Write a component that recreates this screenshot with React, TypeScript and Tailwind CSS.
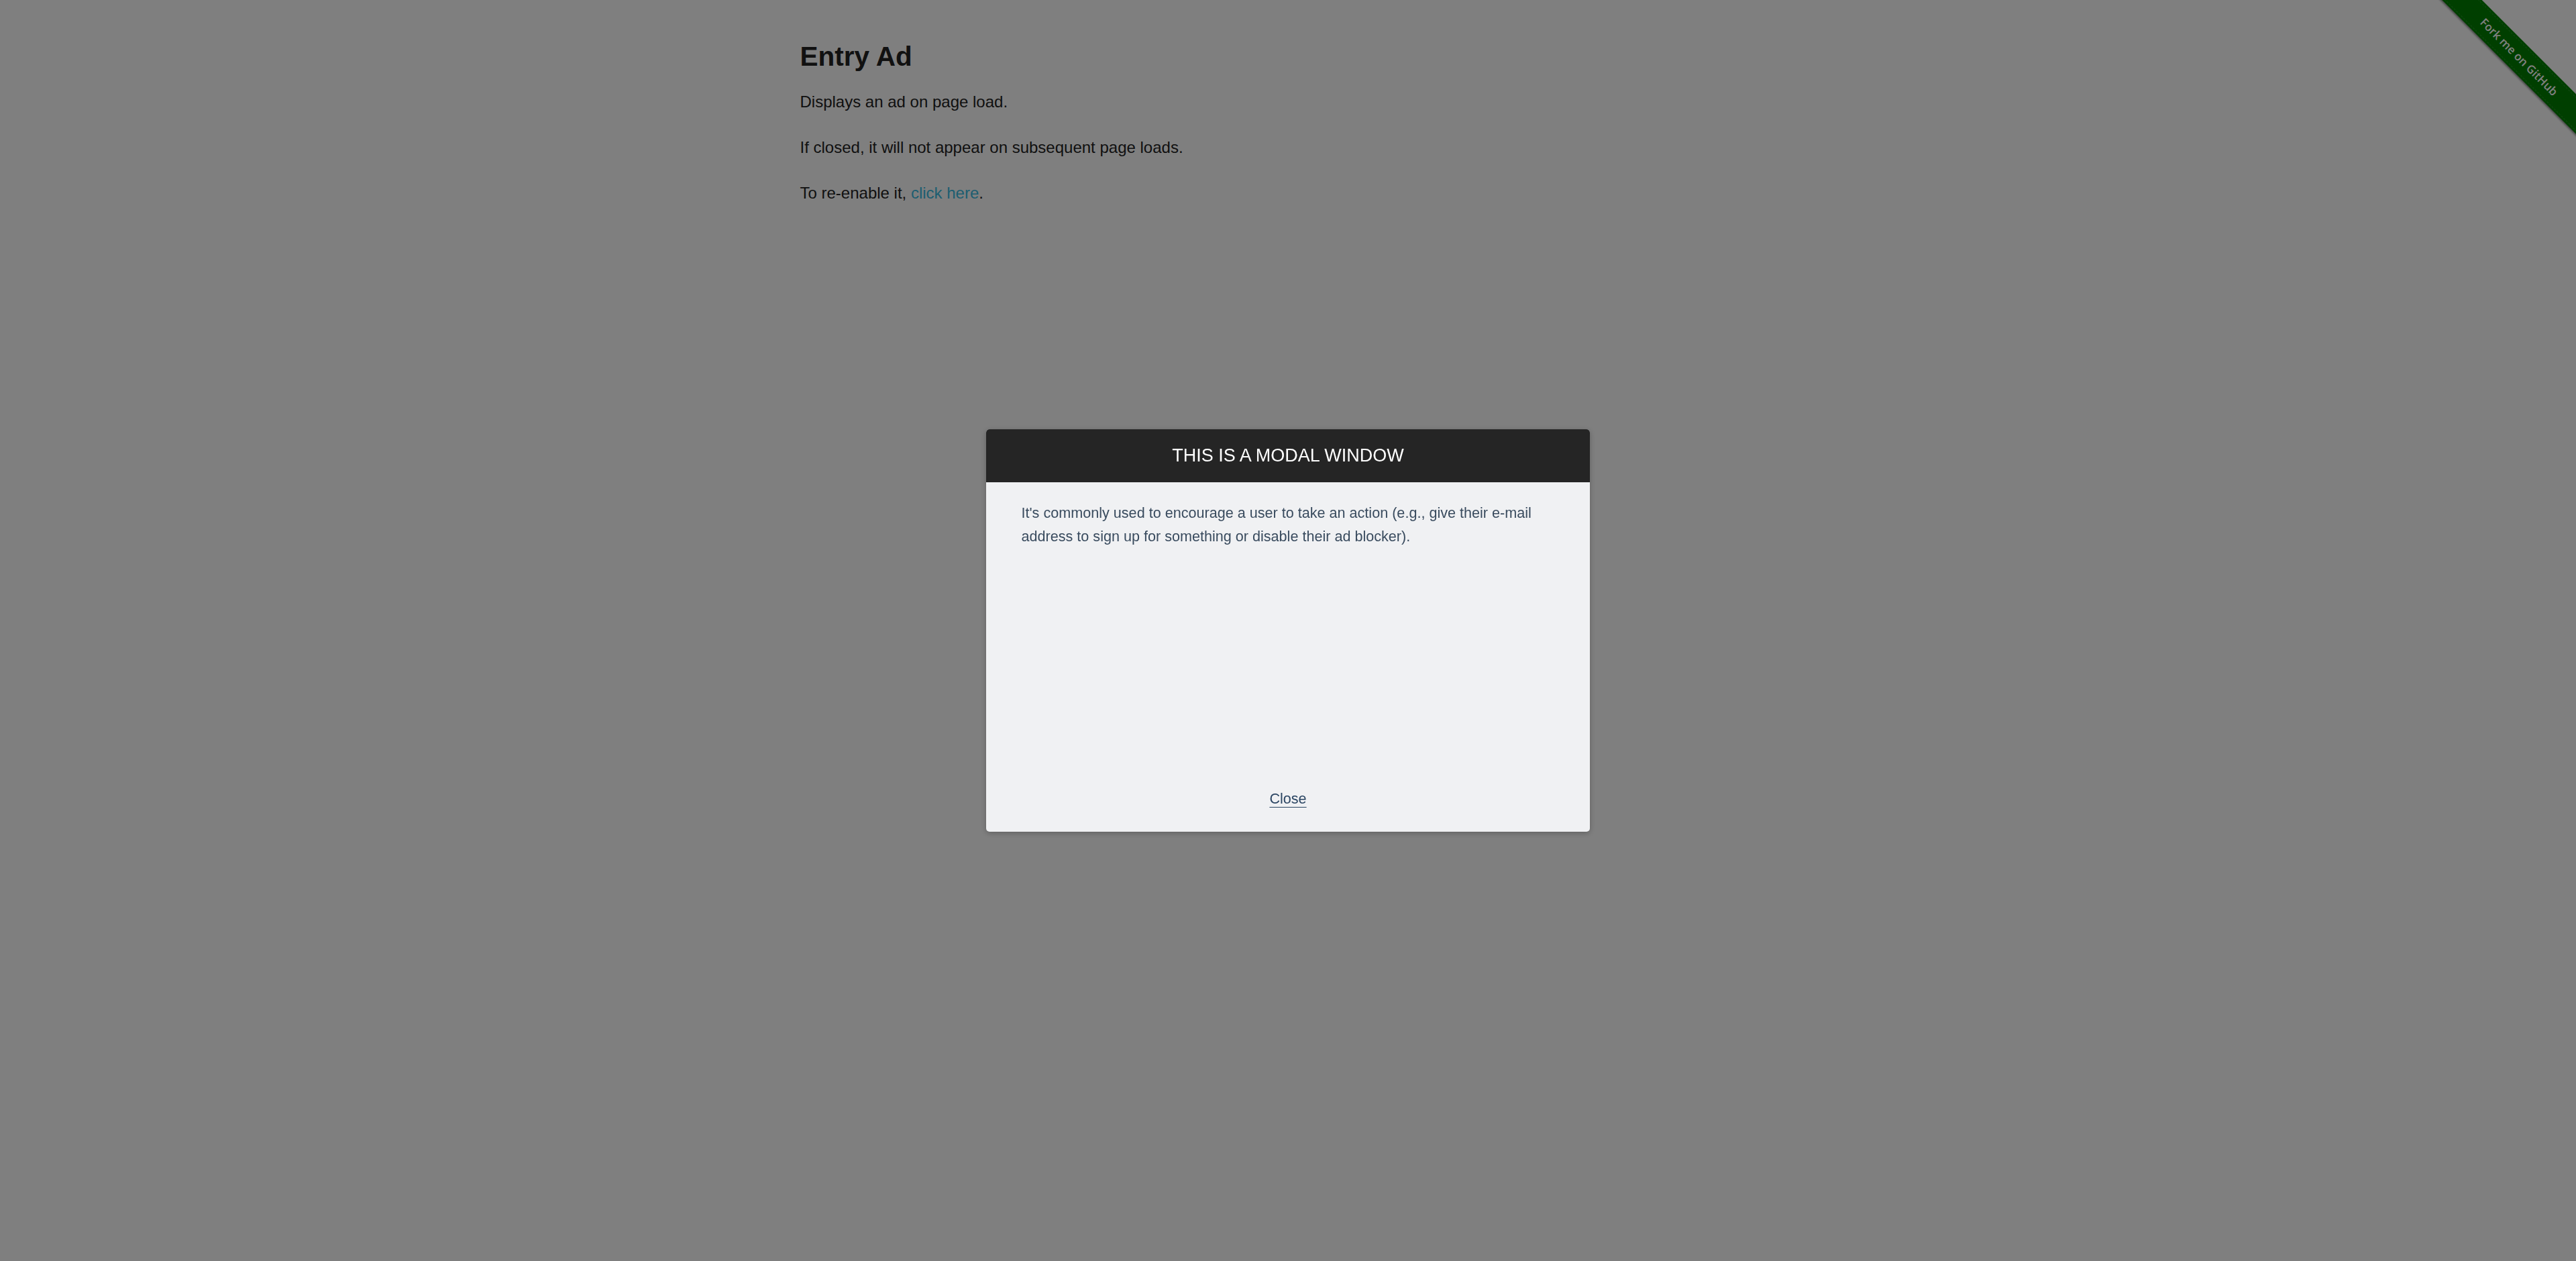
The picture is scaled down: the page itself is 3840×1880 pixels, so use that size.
import React from "react";

const paragraphs: React.ReactNode[] = [
  "Displays an ad on page load.",
  "If closed, it will not appear on subsequent page loads.",
];

const ForkRibbon: React.FC = () => {
  return (
    <div className="absolute top-0 right-0 w-[224px] h-[224px] overflow-hidden pointer-events-none">
      <a
        href="#"
        className="pointer-events-auto absolute left-[-31px] top-[64px] w-[340px] h-[42px] rotate-45 bg-[#007e00] shadow-[0_2px_3px_rgba(0,0,0,0.45)] flex items-center justify-center"
      >
        <span className="absolute inset-x-0 top-[3px] border-t border-dashed border-white/15"></span>
        <span className="absolute inset-x-0 bottom-[3px] border-b border-dashed border-white/15"></span>
        <span className="text-white text-[17px] font-semibold font-['Open_Sans',sans-serif]">
          Fork me on GitHub
        </span>
      </a>
    </div>
  );
};

const EntryModal: React.FC = () => {
  return (
    <div className="fixed inset-0 z-20 flex items-center justify-center">
      <div className="w-[900px] h-[600px] bg-[#f0f1f3] rounded-[5px] overflow-hidden flex flex-col shadow-[0_2px_8px_rgba(0,0,0,0.25)]">
        {/* Header */}
        <div className="h-[79px] shrink-0 bg-[#252525] flex items-center justify-center">
          <h3 className="text-white text-[27px] leading-none uppercase">This is a modal window</h3>
        </div>

        {/* Body */}
        <div className="flex-1 px-[52.5px] pt-[29px] text-[21.6px] leading-[1.6] text-[#394b5e]">
          <p>
            It's commonly used to encourage a user to take an action (e.g., give their e-mail address to sign up
            for something or disable their ad blocker).
          </p>
        </div>

        {/* Footer */}
        <div className="pb-[31px] flex justify-center text-[21.6px] leading-[1.6]">
          <a href="#" className="text-[#2c4663] underline decoration-1 underline-offset-[5px]">
            Close
          </a>
        </div>
      </div>
    </div>
  );
};

export default function App() {
  return (
    <div className="relative min-h-screen w-full bg-white font-['Liberation_Sans',Arial,sans-serif] text-[#222]">
      <ForkRibbon />

      <div className="mx-auto w-[1500px] px-[22.5px] pt-[60px]">
        <h3 className="text-[40.5px] font-bold leading-[1.2] mb-[24px]">Entry Ad</h3>
        {paragraphs.map((text, index) => (
          <p key={index} className="text-[24px] leading-[1.6] mb-[30px]">
            {text}
          </p>
        ))}
        <p className="text-[24px] leading-[1.6] mb-[30px]">
          To re-enable it, <a href="#" className="text-[#3bbce2]">click here</a>.
        </p>
      </div>

      {/* Overlay */}
      <div className="fixed inset-0 z-10 bg-black/50"></div>

      <EntryModal />
    </div>
  );
}
